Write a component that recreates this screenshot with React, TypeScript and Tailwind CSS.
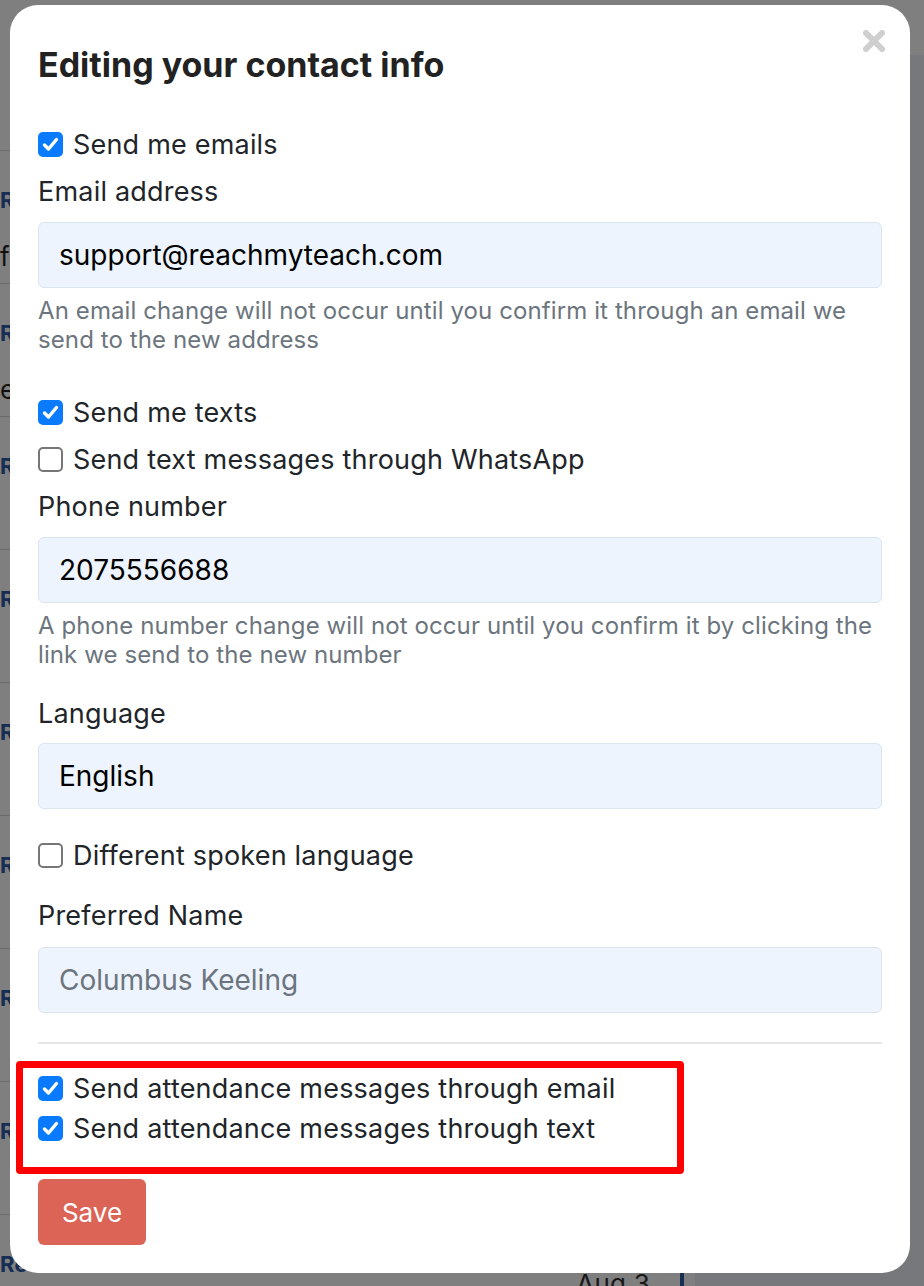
import React from "react";

type CheckProps = {
  checked?: boolean;
};

function CheckBox({ checked }: CheckProps) {
  if (checked) {
    return (
      <span className="flex h-[25px] w-[25px] shrink-0 items-center justify-center rounded-[5px] bg-[#0a7aff]">
        <svg width="19" height="19" viewBox="0 0 19 19" fill="none">
          <path d="M3.5 10l4 4L15.5 4.5" stroke="white" strokeWidth="3.4" strokeLinecap="round" strokeLinejoin="round" />
        </svg>
      </span>
    );
  }
  return <span className="h-[25px] w-[25px] shrink-0 rounded-[5px] border-2 border-[#767676] bg-white" />;
}

function CheckRow({ checked, label, className = "" }: CheckProps & { label: string; className?: string }) {
  return (
    <label className={`flex items-center gap-[10px] leading-[39px] ${className}`}>
      <CheckBox checked={checked} />
      <span>{label}</span>
    </label>
  );
}

function Field({ value, placeholder }: { value?: string; placeholder?: string }) {
  return (
    <div className="flex h-[66px] items-center rounded-[6px] border border-[#dbe5f0] bg-[#edf4fe] px-[20px] text-[28px] leading-[39px] tracking-normal">
      {value ? <span className="text-black">{value}</span> : <span className="text-[#6c757d]">{placeholder}</span>}
    </div>
  );
}

function Help({ children }: { children: React.ReactNode }) {
  return <p className="text-[24px] leading-[29px] tracking-[0.1px] text-[#6c757d]">{children}</p>;
}

const rows = [0, 1, 2, 3, 4, 5, 6, 7, 8];

export default function App() {
  return (
    <div className="relative h-[1286px] w-full overflow-hidden bg-[#edf0f8] font-['Inter','Noto_Sans',sans-serif] text-[27px] tracking-[0.2px] text-[#212529]">
      {/* page behind the modal */}
      <div className="h-[55px] bg-white" />
      <div className="w-[695px] bg-white pt-[95px]">
        {rows.map((i) => (
          <div key={i} className="flex h-[133px] flex-col border-t border-[#d5d5d5] pt-[33px]">
            <span className="text-[22px] font-bold text-[#2c5aa8]">Re</span>
            {i < 2 && <span className="mt-[20px] text-[26px] text-[#222]">{i === 0 ? "fine" : "event"}</span>}
            {i === 8 && (
              <div className="-mt-[17px] flex justify-end">
                <span className="mr-[30px] text-[26px] text-[#333]">Aug 3</span>
                <span className="h-[60px] w-[4px] bg-[#2c5aa8]" />
                <span className="w-[11px]" />
              </div>
            )}
          </div>
        ))}
      </div>

      {/* overlay + modal */}
      <div className="absolute inset-0 bg-black/50" />
      <div className="absolute left-[10px] top-[5px] w-[900px] rounded-[28px] bg-white px-[28px] pb-[28px] pt-[39px]">
        <button className="absolute right-[25px] top-[25px]" aria-label="Close">
          <svg width="22" height="22" viewBox="0 0 22 22">
            <path d="M3 3L19 19M19 3L3 19" stroke="#cfcfcf" strokeWidth="6" strokeLinecap="square" />
          </svg>
        </button>

        <h4 className="text-[34px] font-bold leading-[41px] tracking-normal text-[#222]">Editing your contact info</h4>

        <CheckRow checked label="Send me emails" className="mt-[40px]" />
        <div className="mt-[8px] leading-[39px]">Email address</div>
        <div className="mt-[11px]">
          <Field value="support@reachmyteach.com" />
        </div>
        <div className="mt-[8px]">
          <Help>
            An email change will not occur until you confirm it through an email we
            <br />
            send to the new address
          </Help>
        </div>

        <CheckRow checked label="Send me texts" className="mt-[39px]" />
        <CheckRow label="Send text messages through WhatsApp" className="mt-[8px]" />
        <div className="mt-[8px] leading-[39px]">Phone number</div>
        <div className="mt-[11px]">
          <Field value="2075556688" />
        </div>
        <div className="mt-[8px]">
          <Help>
            A phone number change will not occur until you confirm it by clicking the
            <br />
            link we send to the new number
          </Help>
        </div>

        <div className="mt-[25px] leading-[39px]">Language</div>
        <div className="mt-[10px]">
          <Field value="English" />
        </div>

        <CheckRow label="Different spoken language" className="mt-[27px]" />
        <div className="mt-[21px] leading-[39px]">Preferred Name</div>
        <div className="mt-[12px]">
          <Field placeholder="Columbus Keeling" />
        </div>

        <hr className="mt-[29px] border-t-2 border-[#e6e6e6]" />

        <div className="-ml-[22px] mt-[17px] w-[668px] rounded-[4px] border-[7px] border-[#ff0000] pb-[19px] pl-[15px] pt-px">
          <CheckRow checked label="Send attendance messages through email" />
          <CheckRow checked label="Send attendance messages through text" className="mt-px" />
        </div>

        <button className="mt-[5px] h-[66px] w-[108px] rounded-[6px] bg-[#dc6456] text-[26px] tracking-normal text-white">Save</button>
      </div>
    </div>
  );
}
